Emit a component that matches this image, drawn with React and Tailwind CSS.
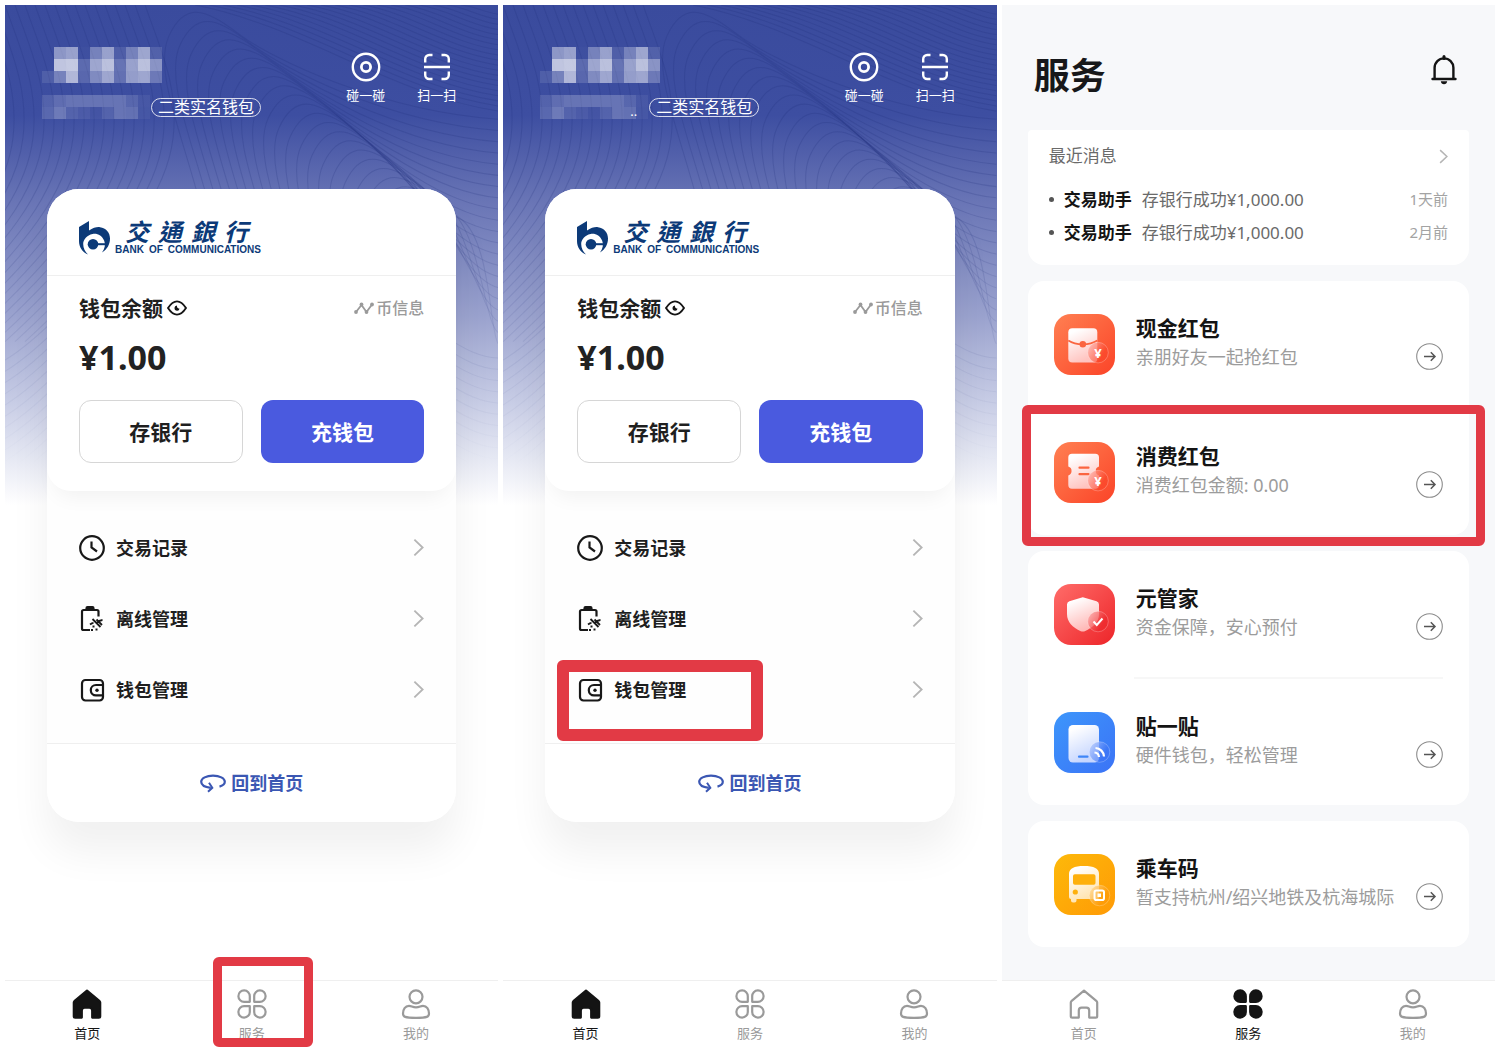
import { useId } from "react";
import clsx from "clsx";

const NAME_MOSAIC = [
  [0, 0.42, 0.48, 0.02, 0.3, 0.48, 0.1, 0.3, 0.5, 0.12],
  [0, 0.68, 0.7, 0.17, 0.5, 0.65, 0.22, 0.48, 0.65, 0.4],
  [0.1, 0.3, 0.6, 0.15, 0.35, 0.5, 0.2, 0.45, 0.5, 0.25],
];

const ID_MOSAIC = [
  [0.12, 0.18, 0.22, 0.22, 0.22, 0.22, 0.22, 0.14, 0.06],
  [0.15, 0.25, 0.12, 0.08, 0.04, 0.12, 0.22, 0.2, 0.05],
];

const range = (n) => Array.from({ length: n }, (_, i) => i);

/* ---------- header artwork ---------- */

function Mosaic({ rows }) {
  const width = rows[0].length * 12;
  const height = rows.length * 12;
  return (
    <svg width={width} height={height} viewBox={`0 0 ${width} ${height}`} className="shrink-0" shapeRendering="crispEdges" aria-hidden="true">
      {rows.map((row, y) =>
        row.map((alpha, x) => (
          <rect key={`${x}-${y}`} x={x * 12} y={y * 12} width="12" height="12" fill="#fff" opacity={alpha} />
        ))
      )}
    </svg>
  );
}

function Waves() {
  return (
    <svg
      viewBox="0 0 493 490"
      preserveAspectRatio="none"
      className="absolute inset-0 h-full w-full"
      fill="none"
      stroke="#1f2f78"
      strokeOpacity="0.2"
      strokeWidth="1"
      aria-hidden="true"
    >
      {/* left side, falling lines */}
      {range(27).map((i) => {
        const x = i * 10 - 120;
        return <path key={i} d={`M${x} 0C${x + 14} 40 ${x + 34} 80 ${x + 28} 130S${x - 10} 230 ${x - 120} 330`} />;
      })}
      {/* low left, continues the falling lines behind the card */}
      {range(14).map((i) => (
        <path key={i} d={`M0 ${348 + i * 11}C20 ${336 + i * 11} 40 ${318 + i * 11} 60 ${298 + i * 11}`} />
      ))}
      {/* centre, hooded lines that run off to the right */}
      {range(21).map((i) => {
        const x = 176 + i * 11;
        const y = 8 + i * 9;
        const end = 112 + i * 11;
        return (
          <path
            key={i}
            d={`M${x + 30} ${y + 230}C${x + 8} ${y + 130} ${x - 30} ${y + 60} ${x - 12} ${y + 22}S${x + 30} ${y} ${x + 60} ${y + 22}S${(x + 573) / 2} ${end - 8} 493 ${end}`}
          />
        );
      })}
      {/* top right, dense fan */}
      {range(20).map((i) => {
        const x = 190 + i * 14;
        const end = 104 - i * 5;
        const run = 493 - x;
        return <path key={i} d={`M${x} 0C${x + run * 0.35} ${20 - i} ${x + run * 0.65} ${end * 0.85} 493 ${end}`} />;
      })}
      {/* low right, beside the card */}
      {range(13).map((i) => (
        <path key={i} d={`M440 ${325 + i * 11}C460 ${338 + i * 11} 475 ${345 + i * 11} 493 ${346 + i * 11}`} />
      ))}
    </svg>
  );
}

/* ---------- line icons ---------- */

function TargetIcon() {
  return (
    <svg width="30" height="30" viewBox="0 0 30 30" fill="none" stroke="#fff" strokeWidth="2.4">
      <circle cx="15" cy="15" r="13.2" />
      <circle cx="15" cy="15" r="4.6" strokeWidth="2.8" />
    </svg>
  );
}

function ScanIcon() {
  return (
    <svg width="30" height="30" viewBox="0 0 30 30" fill="none" stroke="#fff" strokeWidth="2.4">
      <path d="M3.2 10.5V7a4 4 0 0 1 4-4h3.3M19.5 3h3.3a4 4 0 0 1 4 4v3.5M26.8 19.5V23a4 4 0 0 1-4 4h-3.3M10.5 27H7.2a4 4 0 0 1-4-4v-3.5M2 15h26" />
    </svg>
  );
}

function EyeIcon() {
  return (
    <svg width="20" height="20" viewBox="0 0 20 20" fill="none" stroke="#141414" strokeWidth="1.9" strokeLinejoin="round">
      <path d="M1 10C4 5.400 7 3.400 10 3.400S16 5.400 19 10C16 14.600 13 16.600 10 16.600S4 14.600 1 10Z" />
      <path d="M10 7.600A2.600 2.600 0 1 0 12.600 10.600C11 10.900 9.700 9.600 10 7.600Z" fill="#141414" stroke="none" />
    </svg>
  );
}

function TrendIcon() {
  return (
    <svg width="20" height="14" viewBox="0 0 20 14" fill="none" stroke="#9a9a9a" strokeWidth="1.8">
      <path d="M2 11L7.500 4L12.500 11L18 3.500" />
      <g fill="#9a9a9a" stroke="none">
        <circle cx="2" cy="11" r="1.900" />
        <circle cx="7.500" cy="3.500" r="1.900" />
        <circle cx="12.500" cy="11" r="1.900" />
        <circle cx="18" cy="3.500" r="1.900" />
      </g>
    </svg>
  );
}

function ClockIcon() {
  return (
    <svg width="26" height="26" viewBox="0 0 26 26" fill="none" stroke="#181818" strokeWidth="2.200">
      <circle cx="13" cy="13" r="11.800" />
      <path d="M12.500 6.500V12.500L18 16.500" />
    </svg>
  );
}

function OfflineIcon() {
  return (
    <svg width="26" height="26" viewBox="0 0 26 26" fill="none" stroke="#181818" strokeWidth="2.200">
      <path d="M19.500 10.500V5.500a1.500 1.500 0 0 0-1.500-1.500H4.500A1.500 1.500 0 0 0 3 5.500V22.500A1.500 1.500 0 0 0 4.500 24H11" />
      <path d="M7.500 3V2.200a1 1 0 0 1 1-1h5a1 1 0 0 1 1 1V3" fill="#181818" />
      <path d="M13.500 13L21.500 21M17.500 13.500L23 19M18 17C19.500 15 21 14.200 23.500 14M11 18.500C12.200 17.600 13 17 14.500 16.800" strokeWidth="1.800" />
      <path d="M13.500 20.500H15.500M16.500 23.500H18.500M12 24H14" />
    </svg>
  );
}

function WalletIcon() {
  return (
    <svg width="26" height="26" viewBox="0 0 26 26" fill="none" stroke="#181818" strokeWidth="2.200">
      <rect x="3" y="3" width="21" height="20.500" rx="3.500" />
      <path d="M24 8H17a5.200 5.200 0 0 0 0 10.400H24" />
      <circle cx="18" cy="13.200" r="1.700" fill="#181818" stroke="none" />
    </svg>
  );
}

function ReturnIcon() {
  return (
    <svg width="26" height="20" viewBox="0 0 26 20" fill="none" stroke="#3b57b3" strokeWidth="2.200">
      <path d="M19.500 13.600C22.800 12.700 24.800 11 24.800 8.800C24.800 5.300 19.600 2.600 13 2.600S1.200 5.300 1.200 8.800C1.200 11.900 5 14.200 10.800 14.800" />
      <path d="M9 9.800L12.300 14.800L8 18.800" strokeWidth="2" />
    </svg>
  );
}

function ChevronIcon({ className }) {
  return (
    <svg viewBox="0 0 12 20" className={className} fill="none" stroke="#b5b5b5" strokeWidth="2" aria-hidden="true">
      <path d="M1.500 1.500L10.500 10L1.500 18.500" />
    </svg>
  );
}

function BellIcon() {
  return (
    <svg width="26" height="30" viewBox="0 0 26 30" fill="none" stroke="#141414" strokeWidth="2.400">
      <path d="M3.600 24V12.800A9.400 9.400 0 0 1 22.400 12.800V24" />
      <path d="M1.500 24H24.500" strokeLinecap="round" />
      <path d="M13 1.500V3.500" strokeWidth="3" strokeLinecap="round" />
      <path d="M9.800 26.300H16.200C16 28.200 14.700 29.200 13 29.200S10 28.200 9.800 26.300Z" fill="#141414" stroke="none" />
    </svg>
  );
}

/* ---------- tab bar ---------- */

function HomeTabIcon({ active }) {
  return (
    <svg width="30" height="30" viewBox="0 0 30 30" className={active ? "fill-[#141414] stroke-[#141414]" : "fill-none stroke-[#9a9a9a]"} strokeWidth="2.200" strokeLinejoin="round">
      <path d="M15 1.600L27.600 12.200C28 12.600 28.200 13 28.200 13.600V27.200A1.400 1.400 0 0 1 26.800 28.600H20.200V21.500A2.800 2.800 0 0 0 17.400 18.700H12.600A2.800 2.800 0 0 0 9.800 21.500V28.600H3.200A1.400 1.400 0 0 1 1.800 27.200V13.600C1.800 13 2 12.600 2.400 12.200Z" />
    </svg>
  );
}

function ServiceTabIcon({ active }) {
  const petal = "M12.800 12.800H7.300A5.700 5.700 0 1 1 12.800 7.300Z";
  return (
    <svg width="30" height="30" viewBox="0 0 30 30" className={active ? "fill-[#141414] stroke-[#141414]" : "fill-none stroke-[#9a9a9a]"} strokeWidth="2.200" strokeLinejoin="round">
      {[0, 90, 180, 270].map((turn) => (
        <path key={turn} d={petal} transform={`rotate(${turn} 15 15)`} />
      ))}
    </svg>
  );
}

function MineTabIcon() {
  return (
    <svg width="30" height="30" viewBox="0 0 30 30" fill="none" stroke="#9a9a9a" strokeWidth="2.200">
      <circle cx="15" cy="7.800" r="6.500" />
      <path d="M8 16.800C10.500 16.800 11.500 18.400 15 18.400S19.500 16.800 22 16.800C25.800 16.800 28 20.500 28 24.600C28 27.800 26.500 28.800 15 28.800S2 27.800 2 24.600C2 20.500 4.200 16.800 8 16.800Z" />
    </svg>
  );
}

const TABS = [
  { id: "home", label: "首页", Icon: HomeTabIcon },
  { id: "service", label: "服务", Icon: ServiceTabIcon },
  { id: "mine", label: "我的", Icon: MineTabIcon },
];

function Marker({ className }) {
  return <span aria-hidden="true" className={clsx("pointer-events-none absolute z-10 rounded-md border-[#e23a45]", className)} />;
}

function TabBar({ active, marked }) {
  return (
    <nav className="grid grid-cols-3 border-t border-[#efefef] bg-white">
      {TABS.map(({ id, label, Icon }) => (
        <a
          key={id}
          href={`#${id}`}
          className={clsx(
            "relative flex flex-col items-center gap-1 pt-2 pb-1 text-[13px] leading-5",
            active === id ? "text-[#141414]" : "text-[#9a9a9a]"
          )}
        >
          <Icon active={active === id} />
          {label}
          {marked === id && <Marker className="-top-6 bottom-0 left-11 w-[100px] border-9" />}
        </a>
      ))}
    </nav>
  );
}

/* ---------- wallet screen ---------- */

function BankLogo() {
  return (
    <div className="flex items-end gap-1 text-[#0c3a78]">
      <svg width="32" height="34" viewBox="0 0 32 34" fill="currentColor" aria-hidden="true">
        <path d="M0 6L10 0V9.500C14 6.800 18 5.800 21 6.200C27 7 31 11.500 31 17.500C31 23.500 28 28.500 23 31.500C26 27.500 26.600 23.500 25.200 19.800C23.200 14.500 18 12 13.500 13C8 14.200 4.200 18.500 4.200 23C4.200 27 6 31 9 33.500C3 31 0 26 0 20Z" />
        <circle cx="14" cy="23.200" r="5.300" />
        <path d="M17 22.200H26V24.200H17Z" />
      </svg>
      <div className="flex flex-col">
        <span className="flex gap-[9px] pl-[10px] font-['Liberation_Sans','Noto_Sans_CJK_TC',sans-serif] text-[24px] leading-6 font-bold italic">
          <span>交</span>
          <span>通</span>
          <span>銀</span>
          <span>行</span>
        </span>
        <span className="flex gap-[5px] font-['Liberation_Sans',sans-serif] text-[10px] leading-[10px] font-bold">
          <span>BANK</span>
          <span>OF</span>
          <span>COMMUNICATIONS</span>
        </span>
      </div>
    </div>
  );
}

const MENU = [
  { id: "records", label: "交易记录", Icon: ClockIcon },
  { id: "offline", label: "离线管理", Icon: OfflineIcon },
  { id: "wallet", label: "钱包管理", Icon: WalletIcon },
];

function WalletScreen({ markedTab, markedItem, dots }) {
  return (
    <section className="relative flex flex-col bg-white">
      <div className="absolute inset-x-0 top-0 h-[500px] bg-linear-[180deg,#3a4b9d_0%,#3d4ea1_22%,#6672b4_38%,#9aa2ce_62%,#c9cee6_80%,#ffffff_100%]">
        <div className="h-full mask-linear-[180deg,#000_35%,transparent_92%]">
          <Waves />
        </div>
      </div>

      <header className="relative flex h-[184px] justify-between pt-[42px] pr-[42px] pl-[37px]">
        <div className="flex flex-col gap-3">
          <Mosaic rows={NAME_MOSAIC} />
          <div className="relative flex items-center gap-px">
            <Mosaic rows={ID_MOSAIC} />
            {dots && <span className="absolute bottom-0 left-[90px] text-[13px] leading-4 text-white">..</span>}
            <span className="rounded-full border border-white/80 px-1.5 text-[16px] leading-[17px] text-white">二类实名钱包</span>
          </div>
        </div>
        <div className="flex items-start gap-8 pt-[5px] text-[13px] leading-5 text-white">
          <button type="button" className="flex flex-col items-center gap-[3px]">
            <TargetIcon />
            碰一碰
          </button>
          <button type="button" className="flex flex-col items-center gap-[3px]">
            <ScanIcon />
            扫一扫
          </button>
        </div>
      </header>

      <main className="relative mx-[42px] rounded-[32px] bg-[#fefefe] shadow-[0_30px_40px_rgba(0,0,0,0.06)]">
        <div className="rounded-t-[32px] rounded-b-3xl bg-white shadow-[0_14px_20px_-8px_rgba(0,0,0,0.05)]">
          <div className="border-b border-[#efefef] px-8 pt-8 pb-5">
            <BankLogo />
          </div>
          <div className="px-8 pt-[14px] pb-7">
            <div className="flex items-center justify-between">
              <h2 className="flex items-center gap-1 text-[21px] leading-9 font-bold text-[#1f1f1f]">
                钱包余额
                <button type="button" aria-label="显示余额">
                  <EyeIcon />
                </button>
              </h2>
              <a href="#coin" className="flex items-center gap-0.5 text-[16px] leading-6 font-medium text-[#9a9a9a]">
                <TrendIcon />
                币信息
              </a>
            </div>
            <p className="pt-2 text-[34px] leading-[46px] font-bold text-[#222]">¥1.00</p>
            <div className="grid grid-cols-2 gap-[18px] pt-[20px] text-[21px] leading-7 font-bold">
              <button type="button" className="h-[63px] rounded-xl border border-[#d6d6d6] bg-white text-[#1f1f1f]">
                存银行
              </button>
              <button type="button" className="h-[63px] rounded-xl bg-[#4a5adf] text-white">
                充钱包
              </button>
            </div>
          </div>
        </div>

        <ul className="pt-[21px] pb-[18px]">
          {MENU.map(({ id, label, Icon }) => (
            <li key={id} className="relative">
              <a href={`#${id}`} className="flex h-[71px] items-center gap-[11px] px-8 text-[18px] leading-6 font-bold text-[#1f1f1f]">
                <Icon />
                <span className="flex-1">{label}</span>
                <ChevronIcon className="h-[19px] w-[11px]" />
              </a>
              {markedItem === id && <Marker className="top-1.5 left-3 h-[81px] w-[206px] border-12" />}
            </li>
          ))}
        </ul>

        <a
          href="#home"
          className="flex h-[79px] items-center justify-center gap-[5px] rounded-b-[32px] border-t border-[#efefef] bg-white text-[18px] leading-6 font-bold text-[#3b57b3]"
        >
          <ReturnIcon />
          回到首页
        </a>
      </main>

      <div className="mt-auto">
        <TabBar active="home" marked={markedTab} />
      </div>
    </section>
  );
}

/* ---------- service screen ---------- */

function AppIcon({ from, to, soft, badge, badgeX = 44, badgeY = 38.6, children }) {
  const id = useId();
  return (
    <svg width="61" height="61" viewBox="0 0 61 61" className="shrink-0" aria-hidden="true">
      <defs>
        <linearGradient id={`${id}bg`} x1="0" y1="0" x2="1" y2="1">
          <stop offset="0" stopColor={from} />
          <stop offset="1" stopColor={to} />
        </linearGradient>
        <linearGradient id={`${id}fg`} x1="0" y1="0" x2="0.400" y2="1">
          <stop offset="0.150" stopColor="#fff" />
          <stop offset="1" stopColor={soft} />
        </linearGradient>
        <linearGradient id={`${id}badge`} x1="0" y1="0" x2="1" y2="0.600">
          <stop offset="0" stopColor={soft} />
          <stop offset="0.800" stopColor={to} stopOpacity="0.700" />
        </linearGradient>
      </defs>
      <rect width="61" height="61" rx="17" fill={`url(#${id}bg)`} />
      <g fill={`url(#${id}fg)`}>{children}</g>
      <circle cx={badgeX} cy={badgeY} r="10.300" fill={`url(#${id}badge)`} fillOpacity="0.850" stroke="#fff" strokeOpacity="0.300" strokeWidth="0.800" />
      {badge}
    </svg>
  );
}

const yuan = (
  <text x="44" y="43.500" textAnchor="middle" fontSize="13" fontWeight="700" fill="#fff">
    ¥
  </text>
);

function CashIcon() {
  return (
    <AppIcon from="#ff8052" to="#fb4428" soft="#ffc4c0" badge={yuan}>
      <rect x="14.300" y="14.300" width="29" height="34.300" rx="4" />
      <path d="M14.300 26.500C22 31.500 35.600 31.500 43.300 26.500" fill="none" stroke="#fb6540" strokeWidth="1.600" />
      <circle cx="28.800" cy="30.300" r="3.300" fill="#fb6540" />
    </AppIcon>
  );
}

function CouponIcon() {
  return (
    <AppIcon from="#ff8052" to="#fb4428" soft="#ffc4c0" badge={yuan}>
      <path d="M18 11.800H41.300A3.700 3.700 0 0 1 45 15.500V24.600A4.600 4.600 0 0 0 45 33.400V43A3.700 3.700 0 0 1 41.300 46.700H18A3.700 3.700 0 0 1 14.300 43V33.400A4.600 4.600 0 0 0 14.300 24.600V15.500A3.700 3.700 0 0 1 18 11.800Z" />
      <path d="M25.500 25.700H34.500M25.500 32.200H34.500" stroke="#fb6540" strokeWidth="2.200" strokeLinecap="round" />
    </AppIcon>
  );
}

function ShieldIcon() {
  return (
    <AppIcon
      from="#ff6c69"
      to="#ed2529"
      soft="#ffb9b7"
      badgeY={37.5}
      badge={<path d="M39.500 37.500L42.800 41L48.500 34.500" fill="none" stroke="#fff" strokeWidth="2" />}
    >
      <path d="M27 13.700Q28.800 12.900 30.600 13.700L42.600 17.200Q45 18 45 20.500V30C45 38 39 43.500 30.800 47.200Q28.800 48 26.800 47.200C18.500 43.500 13 38 13 30V20.500Q13 18 15.400 17.200Z" />
    </AppIcon>
  );
}

function StickIcon() {
  return (
    <AppIcon
      from="#3d96fb"
      to="#3b73f6"
      soft="#c6d6ff"
      badgeX={45.5}
      badgeY={40}
      badge={
        <g fill="none" stroke="#fff" strokeWidth="2.200">
          <path d="M41.500 36A9 9 0 0 1 50 44.500" />
          <path d="M40.500 40.500A5 5 0 0 1 45 45" />
        </g>
      }
    >
      <rect x="14.500" y="13" width="30.500" height="37.500" rx="4.500" />
      <path d="M25 44.700H33.500" stroke="#3f86f8" strokeWidth="2.200" strokeLinecap="round" />
    </AppIcon>
  );
}

function BusIcon() {
  return (
    <AppIcon
      from="#fdb90a"
      to="#ff9a06"
      soft="#ffe3ae"
      badgeX={45.5}
      badgeY={41.5}
      badge={
        <g fill="none" stroke="#fff">
          <rect x="40.500" y="36.500" width="9.500" height="9.500" rx="1.800" strokeWidth="2" />
          <rect x="44" y="40" width="2.500" height="2.500" fill="#fff" strokeWidth="1" />
        </g>
      }
    >
      <path d="M15 20C15 14.500 20 12 30 12S45 14.500 45 20V43.500Q45 45 43.500 45H22.500V46.500Q22.500 48.500 20.500 48.500H19Q17 48.500 17 46.500V45Q15 45 15 43Z" />
      <rect x="19" y="20.300" width="22.500" height="10.500" rx="1.800" fill="#feb00c" />
      <circle cx="21.300" cy="38" r="2.600" fill="#feb00c" />
    </AppIcon>
  );
}

const MESSAGES = [
  { id: 1, from: "交易助手", text: "存银行成功¥1,000.00", time: "1天前" },
  { id: 2, from: "交易助手", text: "存银行成功¥1,000.00", time: "2月前" },
];

const GROUPS = [
  [
    { id: "cash", title: "现金红包", note: "亲朋好友一起抢红包", Icon: CashIcon },
    { id: "coupon", title: "消费红包", note: "消费红包金额: 0.00", Icon: CouponIcon, marked: true },
  ],
  [
    { id: "butler", title: "元管家", note: "资金保障，安心预付", Icon: ShieldIcon },
    { id: "stick", title: "贴一贴", note: "硬件钱包，轻松管理", Icon: StickIcon, divided: true },
  ],
  [{ id: "bus", title: "乘车码", note: "暂支持杭州/绍兴地铁及杭海城际", Icon: BusIcon }],
];

function ServiceRow({ id, title, note, Icon, marked, divided }) {
  return (
    <li className="relative">
      {divided && <div className="absolute -top-0.5 right-[26px] left-[106px] h-0.5 bg-[#f7f7f7]" />}
      <a href={`#${id}`} className="flex h-[126px] items-center gap-[21px] px-[26px]">
        <Icon />
        <div className="flex flex-1 flex-col gap-px pb-1">
          <h3 className="text-[21px] leading-7 font-bold text-[#141414]">{title}</h3>
          <div className="flex items-center justify-between text-[18px] leading-7 whitespace-nowrap text-[#9c9c9c]">
            {note}
            <svg width="27" height="27" viewBox="0 0 27 27" fill="none" stroke="#8c8c8c" className="shrink-0" aria-hidden="true">
              <circle cx="13.500" cy="13.500" r="12.800" strokeWidth="1.100" />
              <path d="M8 13.500H19M14.800 9.300L19 13.500L14.800 17.700" stroke="#555" strokeWidth="1.500" />
            </svg>
          </div>
        </div>
      </a>
      {marked && <Marker className="-top-1 -right-4 -bottom-[11px] -left-1.5 border-9" />}
    </li>
  );
}

function ServiceScreen() {
  return (
    <section className="flex flex-col bg-[#f7f8fa]">
      <header className="flex items-center justify-between pt-[38px] pr-[38px] pb-[21px] pl-8">
        <h1 className="text-[36px] leading-[66px] font-bold text-[#17181a]">服务</h1>
        <button type="button" aria-label="通知" className="pb-3">
          <BellIcon />
        </button>
      </header>

      <main className="flex flex-col gap-4 px-[26px]">
        <div className="rounded-t-sm rounded-b-2xl bg-white px-[21px] pt-[10px] pb-[16px]">
          <a href="#messages" className="flex items-center justify-between pb-[11px] text-[17px] leading-8 text-[#6a6a6a]">
            最近消息
            <ChevronIcon className="h-[15px] w-[9px]" />
          </a>
          <ul>
            {MESSAGES.map((m) => (
              <li key={m.id} className="flex items-center text-[17px] leading-[33px] text-[#6a6a6a]">
                <span className="mr-[10px] size-[5px] rounded-full bg-[#555]" />
                <span className="mr-[10px] font-bold text-[#141414]">{m.from}</span>
                <span className="flex-1">{m.text}</span>
                <time className="text-[15px] text-[#a3a3a3]">{m.time}</time>
              </li>
            ))}
          </ul>
        </div>

        {GROUPS.map((rows) => (
          <ul key={rows[0].id} className="flex flex-col gap-0.5 rounded-2xl bg-white">
            {rows.map((row) => (
              <ServiceRow key={row.id} {...row} />
            ))}
          </ul>
        ))}
      </main>

      <div className="mt-auto">
        <TabBar active="service" />
      </div>
    </section>
  );
}

export default function App() {
  return (
    <div className="grid min-h-screen grid-cols-3 gap-[5px] bg-white p-[5px] font-['Noto_Sans','Noto_Sans_CJK_SC',sans-serif]">
      <WalletScreen markedTab="service" />
      <WalletScreen markedItem="wallet" dots />
      <ServiceScreen />
    </div>
  );
}
